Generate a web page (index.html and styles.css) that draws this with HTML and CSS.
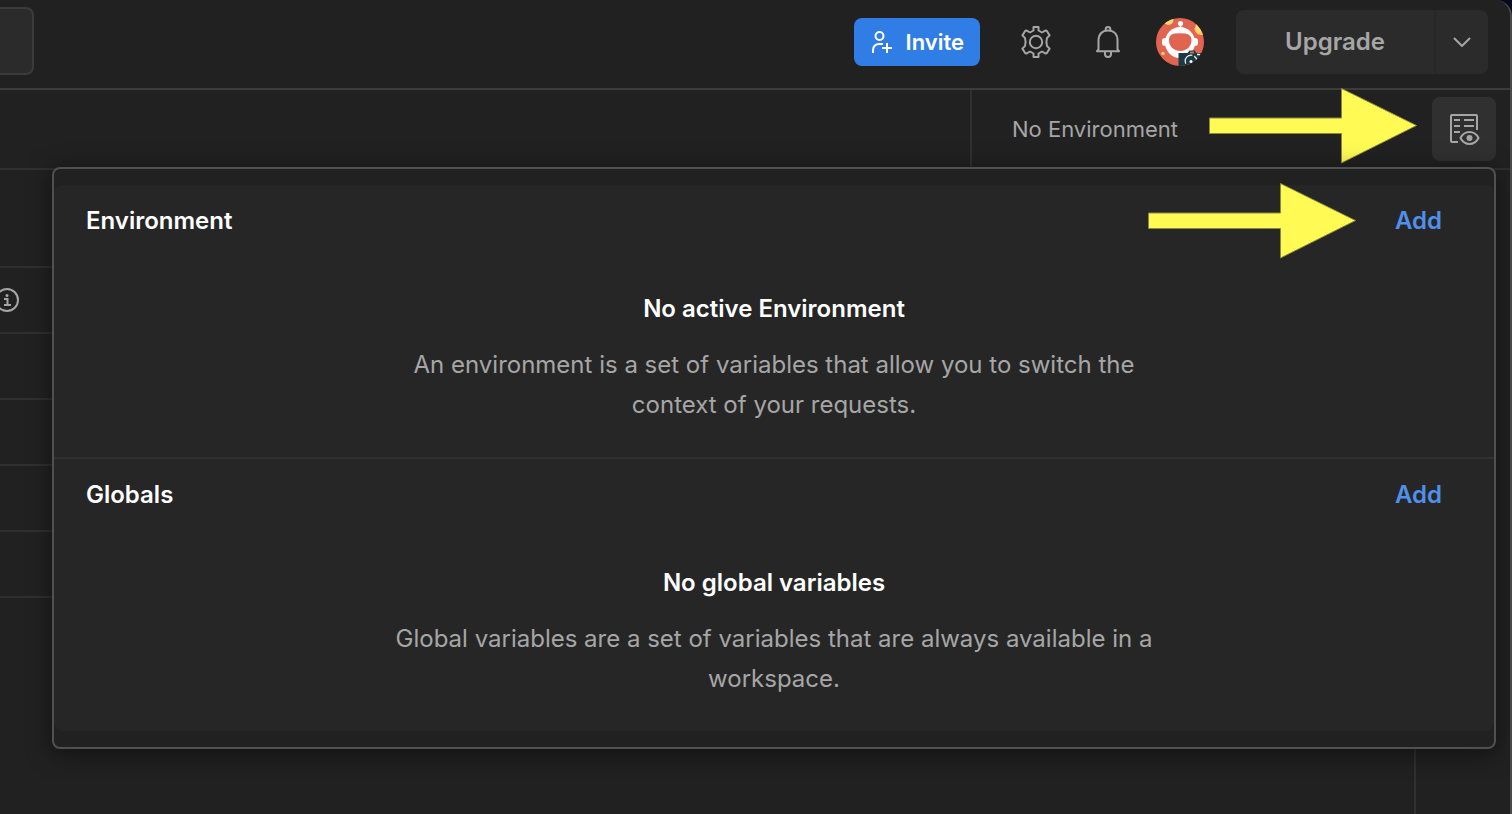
FILE: index.html
```html
<!DOCTYPE html>
<html lang="en">
<head>
<meta charset="utf-8">
<meta name="viewport" content="width=device-width, initial-scale=1">
<title>Environment quick look</title>
<link rel="stylesheet" href="styles.css">
</head>
<body>
<div class="window">
  <header class="header">
    <div class="search-box"></div>
    <div class="header-actions">
      <button class="invite" type="button">
        <svg class="invite-icon" viewBox="0 0 24 24" width="24" height="24" aria-hidden="true">
          <g fill="none" stroke="#fff" stroke-width="2">
            <circle cx="9.500" cy="6" r="4"/>
            <path d="M3 23v-2.500C3 16.500 5.500 14 9.500 14H13M17 13v10M12 18h10"/>
          </g>
        </svg>
        <span>Invite</span>
      </button>
      <button class="icon-button" type="button" aria-label="Settings">
        <svg viewBox="0 0 32 32" width="32" height="32" aria-hidden="true">
          <g fill="none" stroke="#a6a6a6" stroke-width="2" stroke-linejoin="round">
            <path d="M13.500 1h5v3.500l3.500 2 3.700-2.100 1.300.8 2.600 4.200-2.600 2.600q-1.200 4 0 8l2.600 2.600-2.600 4.200-1.300.8-3.700-2.100-3.500 2V31h-5v-3.500l-3.500-2-3.700 2.100-1.300-.8-2.600-4.200L5 20q1.200-4 0-8L2.400 9.400 5 5.200l1.300-.8L10 6.500l3.500-2z"/>
            <circle cx="16" cy="16" r="6.200"/>
          </g>
        </svg>
      </button>
      <button class="icon-button" type="button" aria-label="Notifications">
        <svg viewBox="0 0 32 32" width="32" height="32" aria-hidden="true">
          <g fill="none" stroke="#a6a6a6" stroke-width="2">
            <path d="M6.500 23.500V14.500C6.500 8.500 10 4.600 16 4.600S25.500 8.500 25.500 14.500V23.500l1.500 1.700H5z" stroke-linejoin="round"/>
            <path d="M13.700 5V3.300a2.300 2.300 0 0 1 4.600 0V5M13 26v2a3 3 0 0 0 6 0v-2"/>
          </g>
        </svg>
      </button>
      <button class="avatar" type="button" aria-label="Account">
        <svg viewBox="0 0 48 48" width="48" height="48" aria-hidden="true">
          <defs><clipPath id="avatar-disc"><circle cx="24" cy="24" r="24"/></clipPath></defs>
          <g clip-path="url(#avatar-disc)">
            <path fill="#e16451" d="M0 0h48v48H0z"/>
            <circle cx="12.500" cy="2" r="5" fill="#f8d872"/>
            <circle cx="46" cy="10" r="7" fill="#f8d872"/>
            <path d="M39 10a7 7 0 0 0 4 6l4-2" fill="none" stroke="#f6bd52" stroke-width="1.500"/>
            <circle cx="7" cy="35.500" r="1.800" fill="#f8c760"/>
            <circle cx="24.500" cy="5.500" r="2.600" fill="#fff"/>
            <path d="M24.500 6v6" stroke="#fff" stroke-width="1.500"/>
            <rect x="6" y="20" width="36" height="8" rx="3" fill="#fff"/>
            <ellipse cx="24" cy="24.500" rx="15" ry="15.500" fill="#fff"/>
            <path fill="#e16451" d="M13 22c0-4 2-6 6-6.500q5-.7 10 0c4 .5 6.500 2.500 6.500 6.500 0 7-5.500 11-11.300 11S13 29 13 22z"/>
            <path fill="#1b3a45" d="M22.500 35h9l2-2.500h5l2 2.500H48v13H22.500z"/>
            <path d="M34 34.500h4" stroke="#e16451" stroke-width="2"/>
            <g fill="none" stroke="#e8eeee" stroke-width="1.300">
              <circle cx="35" cy="43" r="5.800" stroke-dasharray="13 2"/>
              <path d="M41 36.500h3"/>
            </g>
            <circle cx="35" cy="43.500" r="1.500" fill="#fff"/>
          </g>
        </svg>
      </button>
      <div class="upgrade">
        <button class="upgrade-main" type="button">Upgrade</button>
        <button class="upgrade-more" type="button" aria-label="More upgrade options">
          <svg viewBox="0 0 18 10" width="18" height="10" aria-hidden="true"><path d="M1 1l8 8 8-8" fill="none" stroke="#a6a6a6" stroke-width="2"/></svg>
        </button>
      </div>
    </div>
  </header>

  <div class="toolbar">
    <div class="environment">
      <button class="environment-select" type="button">No Environment</button>
      <button class="quick-look" type="button" aria-label="Environment quick look">
        <svg viewBox="0 0 32 32" width="32" height="32" aria-hidden="true">
          <g fill="none" stroke="#a6a6a6" stroke-width="2">
            <path d="M10 29H4a1 1 0 0 1-1-1V3a1 1 0 0 1 1-1h24a1 1 0 0 1 1 1v14"/>
            <path d="M6 7h6M16 7h10M6 13h6M16 13h10M6 19h6"/>
            <path d="M12.500 25C14.500 21 18 19 21.500 19s7 2 9 6c-2 4-5.500 6-9 6s-7-2-9-6z"/>
          </g>
          <circle cx="21.500" cy="25" r="3" fill="#a6a6a6"/>
        </svg>
      </button>
    </div>
    <svg class="arrow arrow-quick-look" viewBox="0 0 208 76" width="208" height="76" aria-hidden="true"><path d="M.5 30h132V.5l75 37-75 37.500V45.500H.5z"/></svg>

    <section class="popover" aria-label="Environment quick look">
      <div class="popover-panel">
        <section class="variables">
          <div class="variables-header">
            <h2 class="heading">Environment</h2>
            <button class="add" type="button">Add</button>
            <svg class="arrow arrow-add" viewBox="0 0 208 76" width="208" height="76" aria-hidden="true"><path d="M.5 30h132V.5l75 37-75 37.500V45.500H.5z"/></svg>
          </div>
          <div class="empty">
            <h3 class="heading">No active Environment</h3>
            <p class="empty-text">An environment is a set of variables that allow you to switch the context of your requests.</p>
          </div>
        </section>
        <section class="variables">
          <div class="variables-header">
            <h2 class="heading">Globals</h2>
            <button class="add" type="button">Add</button>
          </div>
          <div class="empty">
            <h3 class="heading">No global variables</h3>
            <p class="empty-text">Global variables are a set of variables that are always available in a workspace.</p>
          </div>
        </section>
      </div>
    </section>
  </div>

  <main class="workspace">
    <div class="request">
      <div class="request-top"></div>
      <div class="request-row">
        <svg class="info" viewBox="0 0 24 24" width="24" height="24" aria-hidden="true">
          <circle cx="12" cy="12" r="11" fill="none" stroke="#a6a6a6" stroke-width="2"/>
          <path d="M9 11h3.500v6M9 17h7" fill="none" stroke="#a6a6a6" stroke-width="2"/>
          <circle cx="12" cy="7.500" r="1.500" fill="#a6a6a6"/>
        </svg>
      </div>
      <div class="request-row"></div>
      <div class="request-row"></div>
      <div class="request-row"></div>
      <div class="request-row"></div>
    </div>
    <aside class="side-bar"></aside>
  </main>
</div>
</body>
</html>
```
FILE: styles.css
```css
* {
  box-sizing: border-box;
}

body {
  margin: 0;
  background: #060a1c;
  color: #fff;
  font-family: Inter, "Liberation Sans", sans-serif;
  font-size: 24px;
  line-height: 40px;
}

button {
  margin: 0;
  padding: 0;
  border: 0;
  background: none;
  color: inherit;
  font: inherit;
  cursor: pointer;
}

svg {
  display: block;
  flex: none;
}

h2,
h3,
p {
  margin: 0;
}

.window {
  display: flex;
  flex-direction: column;
  min-height: 100vh;
  overflow: hidden;
  border-right: 2px solid #4a4a4a;
  border-top-right-radius: 16px;
  background: #212121;
}

.header {
  display: flex;
  align-items: center;
  justify-content: space-between;
  height: 90px;
  padding-right: 22px;
  padding-bottom: 4px;
  border-bottom: 2px solid #3d3b3c;
}

.search-box {
  width: 34px;
  height: 68px;
  margin-bottom: 2px;
  border: 2px solid #3b3b3b;
  border-left: 0;
  border-radius: 0 8px 8px 0;
  background: #2b2b2b;
}

.header-actions {
  display: flex;
  align-items: center;
  gap: 32px;
}

.invite {
  display: flex;
  align-items: center;
  gap: 12px;
  height: 48px;
  margin-right: 8px;
  padding: 0 16px;
  border-radius: 8px;
  background: #307de6;
  font-size: 22px;
  font-weight: 600;
}

.icon-button {
  width: 32px;
  height: 32px;
  margin-right: 8px;
}

.icon-button + .avatar {
  margin-left: -8px;
}

.avatar {
  width: 48px;
  height: 48px;
  border-radius: 50%;
}

.upgrade {
  display: flex;
  height: 64px;
  border-radius: 8px;
  background: #2b2b2b;
  color: #a6a6a6;
  font-weight: 600;
}

.upgrade-main {
  width: 198px;
}

.upgrade-more {
  display: flex;
  align-items: center;
  justify-content: center;
  width: 54px;
  border-left: 2px solid #272727;
}

.toolbar {
  position: relative;
  display: flex;
  justify-content: flex-end;
  height: 80px;
  border-bottom: 2px solid #303030;
}

.environment {
  display: flex;
  align-items: center;
  justify-content: space-between;
  width: 540px;
  padding-right: 14px;
  padding-left: 40px;
  border-left: 2px solid #303030;
}

.environment-select {
  color: #a6a6a6;
  font-size: 22px;
}

.quick-look {
  display: flex;
  align-items: center;
  justify-content: center;
  width: 64px;
  height: 64px;
  border-radius: 8px;
  background: #303030;
}

.arrow {
  position: absolute;
  fill: #fffb54;
  stroke: #8c8a38;
  stroke-width: 1px;
}

.arrow-quick-look {
  top: -2px;
  right: 93px;
}

.arrow-add {
  top: -18px;
  right: 86px;
}

.popover {
  position: absolute;
  top: 77px;
  right: 14px;
  left: 52px;
  z-index: 1;
  padding: 16px 0;
  border: 2px solid #505050;
  border-radius: 8px;
  background: #212121;
  box-shadow: 0 4px 24px rgba(0, 0, 0, 0.5);
}

.popover-panel {
  border-radius: 8px;
  background: #262626;
}

.variables {
  padding: 16px 52px 32px 32px;
}

.variables + .variables {
  border-top: 2px solid #303030;
}

.variables-header {
  position: relative;
  display: flex;
  justify-content: space-between;
}

.heading {
  font-size: 24px;
  font-weight: 600;
}

.add {
  color: #5090ea;
  font-weight: 600;
}

.empty {
  display: flex;
  flex-direction: column;
  align-items: center;
  gap: 16px;
  margin-top: 48px;
  margin-right: -20px;
  text-align: center;
}

.empty-text {
  max-width: 800px;
  color: #a6a6a6;
}

.workspace {
  display: flex;
  flex: 1;
}

.request {
  flex: 1;
  border-right: 2px solid #303030;
}

.request-top {
  height: 98px;
  border-bottom: 2px solid #303030;
}

.request-row {
  display: flex;
  align-items: center;
  height: 66px;
  border-bottom: 2px solid #303030;
}

.info {
  margin-left: -5px;
}

.side-bar {
  width: 94px;
}
```
